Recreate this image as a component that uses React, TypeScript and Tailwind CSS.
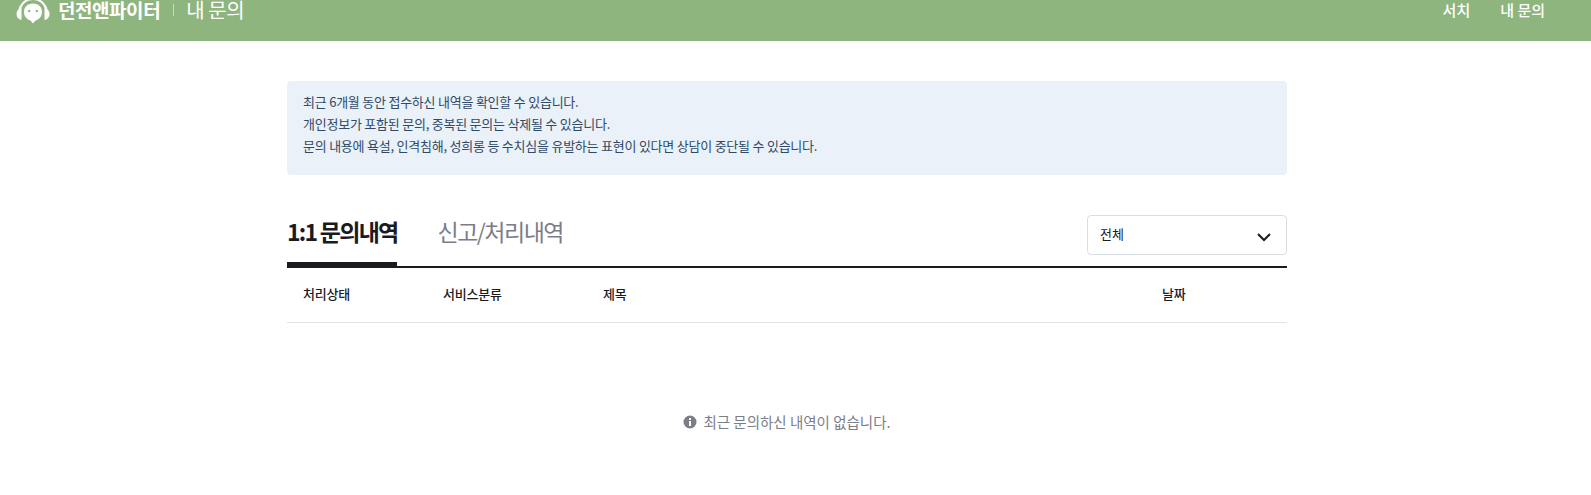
import React from 'react';

const Logo = () => (
  <svg width="34" height="28" viewBox="0 -4 34 28" className="shrink-0" fill="none">
    <path d="M3.500 9C6 3 11-1 17-1s11 4 13.500 10" stroke="#fff" strokeWidth="2" />
    <path d="M5.500 7.500C2.500 8.500 .5 11 .5 14s2 5.500 5 6z" fill="#fff" />
    <path d="M28.500 7.500c3 1 5 3.500 5 6.500s-2 5.500-5 6z" fill="#fff" />
    <path d="M17 3.500c5.500 0 9 3.500 9 8.500 0 4.500-3 7.500-6.500 8.500L17 23.500l-2.500-3C11 19.500 8 16.500 8 12c0-5 3.500-8.500 9-8.500z" fill="#fff" />
    <circle cx="13.200" cy="11" r="1.200" fill="#8fb57f" />
    <circle cx="20.800" cy="11" r="1.200" fill="#8fb57f" />
  </svg>
);

const Chevron = () => (
  <svg width="16" height="10" viewBox="0 0 16 10" fill="none" className="mt-[3px]">
    <path d="M2 2l6 6 6-6" stroke="#1a1a1f" strokeWidth="2" />
  </svg>
);

const InfoIcon = () => (
  <svg width="14" height="14" viewBox="0 0 14 14" className="shrink-0">
    <circle cx="7" cy="7" r="6.500" fill="#7b7d88" />
    <rect x="6" y="6" width="2" height="5" fill="#fff" />
    <rect x="6" y="3" width="2" height="2" fill="#fff" />
  </svg>
);

export default function App() {
  return (
    <div className="min-h-[495px] bg-white font-['Noto_Sans_CJK_KR','Noto_Sans',sans-serif] overflow-hidden">
      <header className="h-[41px] bg-[#8fb57f] text-white flex items-start justify-between pl-4 pr-[46px]">
        <div className="flex items-center h-[20px]">
          <Logo />
          <span className="ml-2 text-[19px] leading-5 font-bold tracking-[-0.45px]">던전앤파이터</span>
          <span className="ml-[13px] mr-[12px] w-px h-3 bg-white/50" />
          <span className="text-[20px] leading-5 tracking-[-0.4px]">내 문의</span>
        </div>
        <nav className="flex items-center h-[20px] gap-[30px] text-[15px] leading-5 font-medium">
          <span>서치</span>
          <span>내 문의</span>
        </nav>
      </header>

      <div className="pr-[17px]">
        <main className="w-[1000px] mx-auto mt-10">
          <div className="h-[94px] bg-[#eaf1f9] rounded px-4 py-[10px] text-[13px] leading-[22px] tracking-[-0.23px] text-[#2f4a66]">
            <p>최근 6개월 동안 접수하신 내역을 확인할 수 있습니다.</p>
            <p>개인정보가 포함된 문의, 중복된 문의는 삭제될 수 있습니다.</p>
            <p>문의 내용에 욕설, 인격침해, 성희롱 등 수치심을 유발하는 표현이 있다면 상담이 중단될 수 있습니다.</p>
          </div>

          <div className="mt-10 flex items-start justify-between border-b-2 border-[#1a1a1f] h-[53px]">
            <div className="flex">
              <div className="h-[52px] border-b-[5px] border-[#1a1a1f] text-[23px] leading-[32px] font-bold tracking-[-1.75px] text-[#1a1a1f]">1:1 문의내역</div>
              <div className="ml-10 text-[23px] leading-[32px] text-[#7b7d88] tracking-[-1.5px]">신고/처리내역</div>
            </div>
            <div className="w-[200px] h-10 border border-[#dcdde2] rounded flex items-center justify-between pl-3 pr-[14px] text-[13px] text-[#1a1a1f]">
              <span className="-mt-[2px]">전체</span>
              <Chevron />
            </div>
          </div>

          <div className="h-[55px] pb-[3px] border-b border-[#e2e2e8] grid grid-cols-[140px_160px_559px_1fr] items-center pl-4 text-[13px] tracking-[-0.2px] font-medium text-[#1a1a1f]">
            <span>처리상태</span>
            <span>서비스분류</span>
            <span>제목</span>
            <span>날짜</span>
          </div>

          <div className="mt-[88px] flex items-center justify-center gap-[6px] text-[14.5px] text-[#7b7d88]">
            <InfoIcon />
            <span>최근 문의하신 내역이 없습니다.</span>
          </div>
        </main>
      </div>
    </div>
  );
}
